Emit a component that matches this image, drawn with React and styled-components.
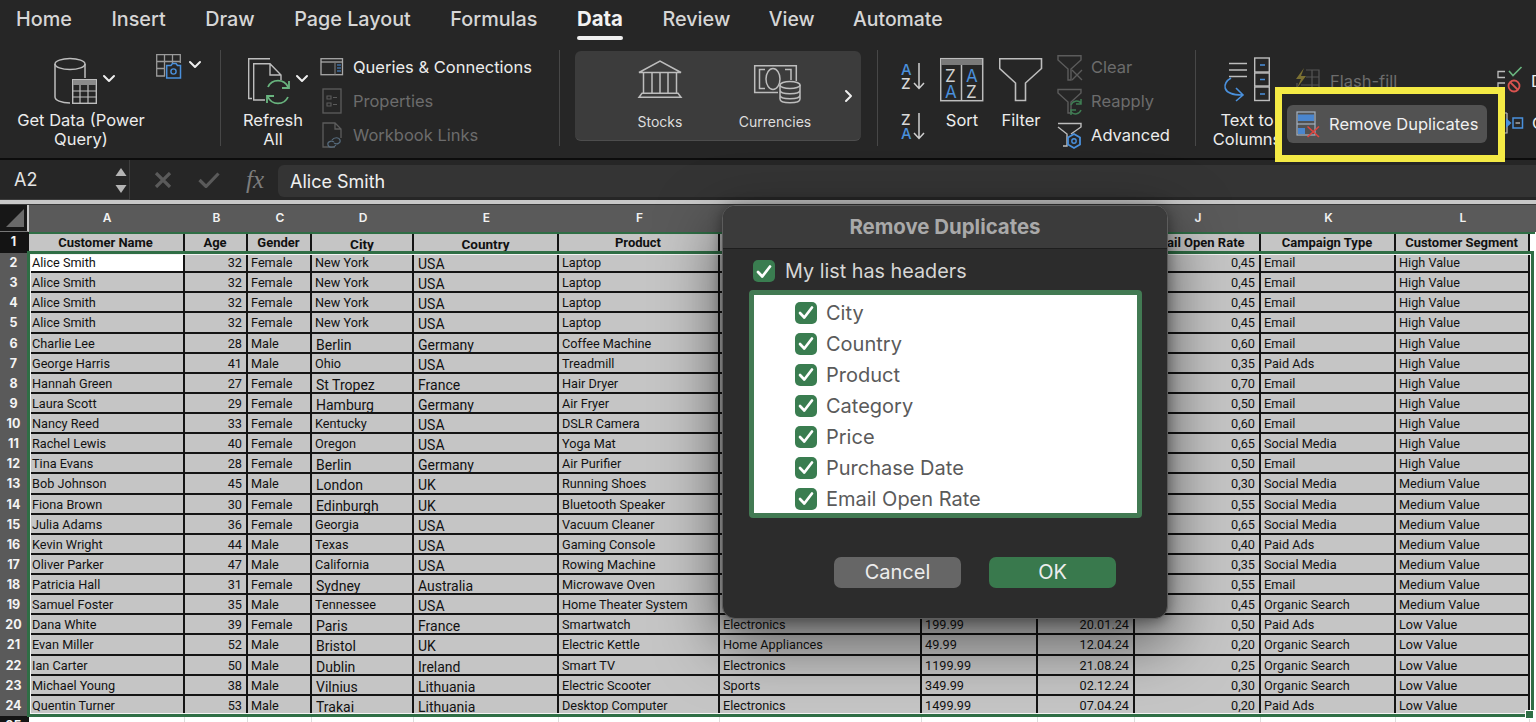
import React from "react";
import styled, { createGlobalStyle } from "styled-components";

const GlobalStyle = createGlobalStyle`
  html, body { margin: 0; padding: 0; background: #262626; overflow: hidden; }
  #root { width: 1536px; height: 722px; overflow: hidden; }
  * { box-sizing: border-box; }
`;

const SANS = `Inter, "Liberation Sans", sans-serif`;
const CELL = `Roboto, "Liberation Sans", sans-serif`;
const COLS = "29px 156px 63px 64px 102px 145px 161px 202px 116px 97px 126px 135px 134px 6px";

const Page = styled.div`
  width: 1536px;
  height: 722px;
  display: flex;
  flex-direction: column;
  background: #262626;
  font-family: ${SANS};
  position: relative;
  overflow: hidden;
`;

/* ---------- tabs ---------- */
const Tabs = styled.nav`
  height: 44px;
  display: flex;
  gap: 39.5px;
  padding-left: 16px;
`;
const Tab = styled.div`
  position: relative;
  height: 38px;
  line-height: 38px;
  font-size: ${(p) => (p.$tight ? 19.4 : 19.8)}px;
  margin-left: ${(p) => (p.$tight ? -1 : 0)}px;
  font-weight: ${(p) => (p.$active ? 700 : 500)};
  color: ${(p) => (p.$active ? "#f2f2f2" : "#d6d6d6")};
  ${(p) =>
    p.$active &&
    `font-size: 20.4px; &::after { content: ""; position: absolute; left: 0; right: 0; bottom: -2px; height: 4px; border-radius: 2px; background: #eee; }`}
`;

/* ---------- ribbon ---------- */
const Ribbon = styled.div`
  position: relative;
  height: 114px;
  display: flex;
  align-items: flex-start;
  flex: none;
`;
const Sep = styled.div`
  width: 1px;
  height: 96px;
  margin-top: 6px;
  background: #474747;
  flex: none;
`;
const Group = styled.div`
  display: flex;
  align-items: flex-start;
  flex: none;
  width: ${(p) => p.$w}px;
  padding-left: ${(p) => p.$pl || 0}px;
  gap: ${(p) => p.$gap || 0}px;
`;
const Tool = styled.div`
  width: ${(p) => p.$w}px;
  margin-left: ${(p) => p.$ml || 0}px;
  flex: none;
  display: flex;
  flex-direction: column;
  align-items: center;
`;
const ToolLabel = styled.div`
  margin-top: 1px;
  font-size: 16.5px;
  line-height: 19px;
  color: #ececec;
  text-align: center;
  white-space: nowrap;
`;
const Icon = styled.svg`
  display: block;
  flex: none;
  fill: none;
`;
const SideIcon = styled.div`
  margin: 6px 0 0 5px;
`;
const SmallList = styled.div`
  display: flex;
  flex-direction: column;
  padding-top: 6px;
  flex: none;
`;
const SmallRow = styled.div`
  height: 34px;
  display: flex;
  align-items: center;
  gap: ${(p) => p.$gap ?? 8}px;
  font-size: 16.5px;
  white-space: nowrap;
  color: ${(p) => (p.$off ? "#6c6c6c" : "#ececec")};
`;
const SortColumn = styled.div`
  display: flex;
  flex-direction: column;
  flex: none;
  padding-top: 18px;
  gap: 20px;
`;
const Panel = styled.div`
  width: 286px;
  height: 90px;
  margin-top: 7px;
  display: flex;
  padding: 5px 0 0 40px;
  gap: 25px;
  background: #3c3c3c;
  border-radius: 6px;
  border-bottom: 1px solid #4d4d4d;
  flex: none;
`;
const PanelItem = styled.div`
  width: 90px;
  display: flex;
  flex-direction: column;
  align-items: center;
`;
const PanelLabel = styled.div`
  margin-top: 6px;
  font-size: 14px;
  line-height: 20px;
  color: #dedede;
`;
const PanelChevron = styled.div`
  margin: 33px 0 0 -2px;
`;
const CutText = styled.div`
  font-size: 16.5px;
  color: #ececec;
  margin-left: 8px;
`;
const Flash = styled.div`
  margin: 20px 0 0 12px;
  width: 203px;
  flex: none;
`;
const CheckTools = styled.div`
  display: flex;
  flex-direction: column;
  flex: none;
  padding-top: 16px;
`;
const CheckToolRow = styled.div`
  display: flex;
  align-items: center;
  height: 42px;
  padding-left: ${(p) => p.$pl || 0}px;
`;

/* annotation highlight over the ribbon */
const Highlight = styled.div`
  position: absolute;
  left: 1275px;
  top: 43px;
  width: 230px;
  height: 75px;
  border: 7.5px solid #f4ea45;
  background: #262626;
  z-index: 3;
  display: flex;
  align-items: center;
  padding: 0 0 1px 5px;
`;
const DupButton = styled.div`
  width: 200px;
  height: 38px;
  border-radius: 6px;
  background: #525252;
  display: flex;
  align-items: center;
  gap: 9px;
  padding: 0 0 1px 9px;
  font-size: 16.5px;
  color: #f0f0f0;
  white-space: nowrap;
`;

/* ---------- formula bar ---------- */
const FormulaBar = styled.div`
  height: 42px;
  flex: none;
  display: flex;
  border-top: 2px solid #0c0c0c;
  background: #262626;
  align-items: stretch;
`;
const NameBox = styled.div`
  width: 130px;
  flex: none;
  padding-left: 14px;
  display: flex;
  align-items: center;
  font-size: 18px;
  color: #e4e4e4;
  border-right: 1px solid #3d3d3d;
  border-bottom: 1px solid #3d3d3d;
`;
const Stepper = styled.div`
  margin-left: auto;
  margin-right: 1px;
`;
const BarIcons = styled.div`
  width: 148px;
  flex: none;
  display: flex;
  align-items: center;
`;
const Fx = styled.span`
  font-family: "Liberation Serif", serif;
  font-style: italic;
  font-size: 25px;
  color: #7d7d7d;
  margin-left: 26px;
`;
const BarMark = styled(Icon)`
  margin-left: ${(p) => p.$ml}px;
`;
const FormulaInput = styled.div`
  flex: 1;
  margin: 5px 0 3px 0;
  background: #343434;
  border-radius: 6px 0 0 6px;
  padding-left: 12px;
  display: flex;
  align-items: center;
  font-size: 18px;
  color: #f0f0f0;
`;
const TopRule = styled.div`
  height: 5px;
  flex: none;
  background: #c8c8c8;
  border-bottom: 1px solid #3a3a3a;
`;

/* ---------- sheet ---------- */
const Sheet = styled.div`
  position: relative;
  flex: 1;
  background: #fff;
  overflow: hidden;
  font-family: ${CELL};
`;
const ColHeader = styled.div`
  display: grid;
  grid-template-columns: ${COLS};
  height: 27px;
  background: #5a5a5a;
`;
const ColLetter = styled.div`
  font-family: ${SANS};
  font-weight: 600;
  font-size: 12px;
  line-height: 25px;
  color: #f2f2f2;
  text-align: center;
`;
const Corner = styled.div`
  background: #171717;
  border-right: 2px solid #c8c8c8;
  border-bottom: 1px solid #777;
  display: flex;
  align-items: flex-end;
  justify-content: flex-end;
  padding: 0 3px 4px 0;
`;
const Row = styled.div`
  display: grid;
  grid-template-columns: ${COLS};
  height: ${(p) => p.$h || 20.13}px;
`;
const RowNum = styled.div`
  background: ${(p) => (p.$dark ? "#141414" : "#5a5a5a")};
  color: #f4f4f4;
  font-family: ${SANS};
  font-weight: 700;
  font-size: 12.5px;
  text-align: center;
  line-height: 20px;
  padding-right: 2px;
`;
const Cell = styled.div`
  background: ${(p) => (p.$on ? "#fff" : "#c5c5c5")};
  border-right: 2px solid #141414;
  border-bottom: 2px solid #141414;
  color: #111;
  font-size: ${(p) => (p.$big ? 14 : 12.7)}px;
  line-height: ${(p) => (p.$big ? 21 : 19)}px;
  padding: ${(p) => (p.$big ? "1px 4px 0" : "0 4px 0 3px")};
  text-align: ${(p) => (p.$right ? "right" : "left")};
  white-space: nowrap;
  overflow: hidden;
`;
const HeadCell = styled(Cell)`
  font-weight: 700;
  text-align: center;
  font-size: ${(p) => (p.$big ? 13.5 : 13)}px;
  border-bottom: 0;
  padding-top: ${(p) => (p.$big ? 2 : 1)}px;
`;
const Blank = styled.div`
  background: #fff;
`;
const EmptyCell = styled.div`
  background: #fff;
  border-right: 1px solid #dcdcdc;
`;
const HeadFrame = styled.div`
  position: absolute;
  left: 29px;
  top: 27px;
  width: 1506px;
  height: 21px;
  border-top: 2px solid #2f6e45;
  pointer-events: none;
`;
const SelectFrame = styled.div`
  position: absolute;
  left: 27px;
  top: 46px;
  width: 1507px;
  height: 466px;
  border: 3px solid #2f6e45;
  box-shadow: inset 0 0 0 1px #f4f4f4;
  pointer-events: none;
  z-index: 1;
`;
const Handle = styled.div`
  position: absolute;
  right: -3px;
  bottom: -5px;
  width: 9px;
  height: 9px;
  background: #2f6e45;
  border: 1px solid #fff;
`;

/* ---------- dialog ---------- */
const Dialog = styled.div`
  position: absolute;
  left: 722px;
  top: 205px;
  width: 446px;
  height: 414px;
  background: #2c2c2c;
  border: 1px solid #5c5c5c;
  border-radius: 13px;
  box-shadow: 0 22px 60px 4px rgba(0, 0, 0, 0.5), 0 2px 14px rgba(0, 0, 0, 0.4);
  z-index: 5;
  display: flex;
  flex-direction: column;
  overflow: hidden;
`;
const DialogTitle = styled.div`
  height: 43px;
  flex: none;
  background: #3b3b3b;
  border-bottom: 1px solid #1e1e1e;
  color: #a9a9a9;
  font-weight: 700;
  font-size: 20.4px;
  line-height: 41px;
  text-align: center;
`;
const HeadersRow = styled.div`
  display: flex;
  align-items: center;
  gap: 10px;
  margin: 11px 0 0 30px;
  font-size: 19.8px;
  line-height: 22px;
  color: #d6d6d6;
`;
const ListBox = styled.div`
  width: 393px;
  height: 228px;
  margin: 8px 0 0 26px;
  background: #fff;
  border: 5px solid #427a53;
  border-radius: 4px;
  padding: 2px 0 0 41px;
  display: flex;
  flex-direction: column;
  overflow: hidden;
`;
const ListRow = styled.div`
  height: 31px;
  flex: none;
  display: flex;
  align-items: center;
  gap: 9px;
  font-size: 20px;
  color: #5a5a5a;
`;
const Box = styled.span`
  width: 22px;
  height: 22px;
  flex: none;
  background: #3a7d50;
  border-radius: 5px;
  display: flex;
  align-items: center;
  justify-content: center;
`;
const Buttons = styled.div`
  display: flex;
  gap: 28px;
  margin: 39px 0 0 111px;
`;
const DialogButton = styled.div`
  width: 127px;
  height: 31px;
  border-radius: 7px;
  background: ${(p) => (p.$primary ? "#39794d" : "#666")};
  color: #ededed;
  font-size: 20px;
  line-height: 30px;
  text-align: center;
`;
const IconLetter = styled.text`
  font-family: ${SANS};
  font-size: ${(p) => p.$size || 15}px;
  font-weight: ${(p) => p.$weight || 500};
`;

/* ---------- icons ---------- */
const G = "#bdbdbd";
const D = "#5c5c5c";
const B = "#4a90dc";
const Chev = ({ x, y, c = "#eee" }) => (
  <path d={`M${x - 5} ${y - 3} L${x} ${y + 2} L${x + 5} ${y - 3}`} stroke={c} strokeWidth="2" strokeLinecap="round" strokeLinejoin="round" />
);

const GetDataIcon = () => (
  <Icon width="128" height="66" viewBox="17 44 128 66">
    <ellipse cx="70" cy="64" rx="15" ry="5.5" stroke={G} strokeWidth="1.5" />
    <path d="M55 64V97C55 100 61 103 70 103M85 64V78" stroke={G} strokeWidth="1.5" />
    <rect x="72.7" y="79.7" width="23.6" height="23.6" stroke={G} strokeWidth="1.4" />
    <rect x="73" y="80" width="23" height="5" fill="#8a8a8a" />
    <path d="M72 91H97M72 97H97M80 85V103M88 85V103" stroke={G} strokeWidth="1.2" />
    <Chev x={109} y={79} />
  </Icon>
);
const CameraTableIcon = () => (
  <Icon width="55" height="32" viewBox="150 50 55 32">
    <path d="M165 76H156.7V54.7H180.3V63M156.7 61.5H180M156.7 68.5H165M164.5 55V76M172.5 55V63" stroke="#9a9a9a" strokeWidth="1.3" />
    <path d="M166.7 78V65.5H171L172.5 63.5H176L177.5 65.5H180.5V78Z" stroke={B} strokeWidth="1.5" />
    <circle cx="173.5" cy="71.5" r="2.6" stroke={B} strokeWidth="1.4" />
    <Chev x={195} y={65} />
  </Icon>
);
const RefreshIcon = () => (
  <Icon width="80" height="66" viewBox="233 44 80 66">
    <path d="M270 58.7H248.7V98.5H252" stroke={G} strokeWidth="1.4" />
    <path d="M265 100H253.7V63.7H270L281 75V80M270 64V75H281" stroke={G} strokeWidth="1.4" />
    <path d="M268 87A11 11 0 0 1 288 87M288 97A11 11 0 0 1 268 97" stroke="#69b57f" strokeWidth="1.8" />
    <path d="M289 81V88H282M267 103V96H274" stroke="#69b57f" strokeWidth="1.8" />
    <Chev x={302} y={79} />
  </Icon>
);
const QueriesIcon = () => (
  <Icon width="24" height="34" viewBox="320 50 24 34">
    <rect x="321" y="58.7" width="21.5" height="16" stroke="#a8a8a8" strokeWidth="1.3" />
    <path d="M321 62H342.5" stroke="#a8a8a8" strokeWidth="1.3" />
    <path d="M335 62V74.5" stroke="#777" strokeWidth="1.2" />
    <path d="M337 65H341M337 68H341M337 71H341" stroke={B} strokeWidth="1.2" />
  </Icon>
);
const PropertiesIcon = () => (
  <Icon width="24" height="34" viewBox="320 84 24 34">
    <rect x="323" y="89" width="18" height="24" stroke={D} strokeWidth="1.3" />
    <path d="M327 96H331V99H327ZM327 103H331V106H327ZM333 97.5H337M333 104.5H337" stroke={D} strokeWidth="1.1" />
  </Icon>
);
const LinksIcon = () => (
  <Icon width="24" height="34" viewBox="320 118 24 34">
    <path d="M335 147H323V123H335L341 129V138M335 123V129H341" stroke={D} strokeWidth="1.3" />
    <path d="M332 140C334 137 339 137 340 140C341 143 337 145 334 143M336 145C334 148 329 148 328 145C327 142 331 140 334 142" stroke="#566b7d" strokeWidth="1.2" />
  </Icon>
);
const BankIcon = () => (
  <Icon width="50" height="50" viewBox="635 56 50 50">
    <path d="M639 72.5L660 61L681 72.5H639Z" stroke={G} strokeWidth="1.5" />
    <path d="M643.5 73V93M652 73V93M660 73V93M668 73V93M676.5 73V93" stroke={G} strokeWidth="1.5" />
    <path d="M642 93.2H678L681 97.3H639Z" stroke={G} strokeWidth="1.5" />
  </Icon>
);
const CurrencyIcon = () => (
  <Icon width="60" height="50" viewBox="745 56 60 50">
    <path d="M778 92.5H754.7V65.7H796.3V81" stroke={G} strokeWidth="1.5" />
    <path d="M765 69.5H759.5V88.5H765M785 69.5H791V80" stroke={G} strokeWidth="1.5" />
    <ellipse cx="773" cy="79" rx="7" ry="10.5" stroke={G} strokeWidth="1.5" />
    <rect x="779" y="82" width="22" height="20" rx="9" fill="#3c3c3c" />
    <ellipse cx="790" cy="85" rx="10" ry="3.6" stroke={G} strokeWidth="1.5" />
    <path d="M780 85V99C780 104 800 104 800 99V85M780 90C780 95 800 95 800 90M780 95C780 100 800 100 800 95" stroke={G} strokeWidth="1.5" />
  </Icon>
);
const AzIcon = ({ top, bottom, topColor, bottomColor }) => (
  <Icon width="26" height="30" viewBox="0 0 26 30">
    <IconLetter x="1" y="12.5" fill={topColor}>{top}</IconLetter>
    <IconLetter x="1" y="26.5" fill={bottomColor}>{bottom}</IconLetter>
    <path d="M19 1V26M14 21L19 26.5L24 21" stroke="#cfcfcf" strokeWidth="1.5" />
  </Icon>
);
const SortIcon = () => (
  <Icon width="44" height="66" viewBox="941 44 44 66">
    <rect x="941.7" y="58.7" width="42" height="42" stroke={G} strokeWidth="1.5" />
    <rect x="942" y="59" width="41" height="6" fill="#7a7a7a" />
    <path d="M962.5 65V100" stroke={G} strokeWidth="1.5" />
    <IconLetter x="946" y="82" $size={17} $weight={400} fill="#d0d0d0">Z</IconLetter>
    <IconLetter x="946" y="98" $size={17} $weight={400} fill={B}>A</IconLetter>
    <IconLetter x="967" y="82" $size={17} $weight={400} fill={B}>A</IconLetter>
    <IconLetter x="967" y="98" $size={17} $weight={400} fill="#d0d0d0">Z</IconLetter>
  </Icon>
);
const FilterIcon = () => (
  <Icon width="44" height="66" viewBox="999 44 44 66">
    <path d="M999.7 58.7H1041.5V68.5L1025.5 83V100.5H1015.5V83L999.7 68.5Z" stroke={G} strokeWidth="1.6" />
  </Icon>
);
const ClearIcon = () => (
  <Icon width="26" height="34" viewBox="1057 50 26 34">
    <path d="M1058 55.7H1081V60L1071 69V80H1068V69L1058 60Z" stroke={D} strokeWidth="1.4" />
    <path d="M1072 70L1082 80M1082 70L1072 80" stroke={D} strokeWidth="1.4" />
  </Icon>
);
const ReapplyIcon = () => (
  <Icon width="26" height="34" viewBox="1057 84 26 34">
    <path d="M1058 89.5H1081V93L1071 102V113H1068V102L1058 93Z" stroke={D} strokeWidth="1.4" />
    <path d="M1071 105A6 6 0 0 1 1081 103M1081 110A6 6 0 0 1 1071 112M1081 99V104H1076M1071 115V110H1076" stroke="#3f7d53" strokeWidth="1.5" />
  </Icon>
);
const AdvancedIcon = () => (
  <Icon width="26" height="34" viewBox="1057 118 26 34">
    <path d="M1058 123.5H1081V127L1071 134M1058 127L1067 134V146H1063" stroke={G} strokeWidth="1.4" />
    <path d="M1074 134L1080 137.5V144.5L1074 148L1068 144.5V137.5Z" stroke={B} strokeWidth="1.8" />
    <circle cx="1074" cy="141" r="2.2" stroke={B} strokeWidth="1.4" />
  </Icon>
);
const TextColsIcon = () => (
  <Icon width="70" height="66" viewBox="1212 44 70 66">
    <path d="M1229 63.5H1247M1229 70H1247M1229 76.5H1247" stroke={G} strokeWidth="1.6" />
    <rect x="1254.7" y="58" width="14.6" height="14" stroke={G} strokeWidth="1.4" />
    <rect x="1254.7" y="73" width="14.6" height="13" stroke={G} strokeWidth="1.4" />
    <rect x="1254.7" y="87" width="14.6" height="13.5" stroke={G} strokeWidth="1.4" />
    <path d="M1260 65H1265M1260 79.5H1265M1260 94H1265" stroke={B} strokeWidth="1.6" />
    <path d="M1231 78C1222 83 1221 95 1242 95M1236 88L1243 95L1236 101" stroke={B} strokeWidth="1.6" />
  </Icon>
);
const FlashRowIcon = () => (
  <Icon width="26" height="34" viewBox="1293 64 26 34">
    <path d="M1305 70H1318V92H1296V83M1311 70V92M1305 77H1318M1300 85H1318" stroke="#555" strokeWidth="1.2" />
    <path d="M1303 68L1295 79H1300L1296 88L1305 76H1300Z" fill="#7b7032" />
  </Icon>
);
const DupIcon = () => (
  <Icon width="24" height="28" viewBox="1297 111 24 28">
    <rect x="1298" y="113" width="18" height="23" stroke="#a4b2c2" strokeWidth="1.2" />
    <rect x="1299" y="115.5" width="16" height="6.5" fill="#4a86cf" />
    <rect x="1299" y="129" width="7" height="6" fill="#4a86cf" />
    <path d="M1298 125H1316" stroke="#a4b2c2" strokeWidth="1.2" />
    <path d="M1308.5 127.5L1320 138M1320 127.5L1308.5 138" stroke="#e0453f" strokeWidth="1.6" />
  </Icon>
);
const ValidIcon = () => (
  <Icon width="26" height="32" viewBox="1497 66 26 32">
    <path d="M1505 72.5H1498V78.5H1505M1505 84H1498V90H1505" stroke={G} strokeWidth="1.3" />
    <path d="M1509 72L1513 76.5L1521.5 68" stroke="#69b57f" strokeWidth="1.6" />
    <circle cx="1514" cy="87" r="5.5" stroke="#d9534f" strokeWidth="1.8" />
    <path d="M1510 83L1518 91" stroke="#d9534f" strokeWidth="1.8" />
  </Icon>
);
const ConsolidateIcon = () => (
  <Icon width="19" height="32" viewBox="1504 106 19 32">
    <path d="M1506 112H1504M1506 112V132H1504" stroke={G} strokeWidth="1.2" />
    <path d="M1505 117L1510.5 122L1505 127Z" fill={B} />
    <rect x="1512" y="117" width="9.5" height="10" stroke={B} strokeWidth="1.5" />
    <path d="M1514.5 122H1519" stroke={G} strokeWidth="1.3" />
  </Icon>
);
const SmallChevronRight = () => (
  <Icon width="10" height="14" viewBox="0 0 10 14">
    <path d="M3 2L8 7L3 12" stroke="#eee" strokeWidth="2" strokeLinecap="round" strokeLinejoin="round" />
  </Icon>
);
const StepArrows = () => (
  <Icon width="14" height="40" viewBox="0 0 14 36">
    <path d="M7 6L12.5 14H1.5Z" fill="#b5b5b5" />
    <path d="M7 31L12.5 23H1.5Z" fill="#b5b5b5" />
  </Icon>
);
const CancelMark = () => (
  <BarMark width="18" height="16" viewBox="0 0 18 16" $ml={24}>
    <path d="M2 1L16 15M16 1L2 15" stroke="#5a5a5a" strokeWidth="3.2" />
  </BarMark>
);
const EnterMark = () => (
  <BarMark width="22" height="16" viewBox="0 0 22 16" $ml={26}>
    <path d="M1.5 8L8 14.5L20.5 1.5" stroke="#5a5a5a" strokeWidth="3.2" />
  </BarMark>
);
const CornerMark = () => (
  <Icon width="18" height="18" viewBox="0 0 18 18">
    <path d="M18 0V18H0Z" fill="#6a6a6a" />
  </Icon>
);
const Tick = () => (
  <Icon width="16" height="15" viewBox="0 0 16 15">
    <path d="M2 8L6.3 12.5L14 2.5" stroke="#fff" strokeWidth="2.7" strokeLinecap="round" strokeLinejoin="round" />
  </Icon>
);

/* ---------- data ---------- */
const LETTERS = ["A", "B", "C", "D", "E", "F", "G", "H", "I", "J", "K", "L"];
const HEADERS = ["Customer Name", "Age", "Gender", "City", "Country", "Product", "Category", "Price", "Purchase Date", "Email Open Rate", "Campaign Type", "Customer Segment"];
const HV = "High Value", MV = "Medium Value", LV = "Low Value", OS = "Organic Search", SM = "Social Media", PA = "Paid Ads";
const ROWS = [
  ["Alice Smith", 32, "Female", "New York", 0, "USA", "Laptop", "", "", "", "0,45", "Email", HV],
  ["Alice Smith", 32, "Female", "New York", 0, "USA", "Laptop", "", "", "", "0,45", "Email", HV],
  ["Alice Smith", 32, "Female", "New York", 0, "USA", "Laptop", "", "", "", "0,45", "Email", HV],
  ["Alice Smith", 32, "Female", "New York", 0, "USA", "Laptop", "", "", "", "0,45", "Email", HV],
  ["Charlie Lee", 28, "Male", "Berlin", 1, "Germany", "Coffee Machine", "", "", "", "0,60", "Email", HV],
  ["George Harris", 41, "Male", "Ohio", 0, "USA", "Treadmill", "", "", "", "0,35", PA, HV],
  ["Hannah Green", 27, "Female", "St Tropez", 1, "France", "Hair Dryer", "", "", "", "0,70", "Email", HV],
  ["Laura Scott", 29, "Female", "Hamburg", 1, "Germany", "Air Fryer", "", "", "", "0,50", "Email", HV],
  ["Nancy Reed", 33, "Female", "Kentucky", 0, "USA", "DSLR Camera", "", "", "", "0,60", "Email", HV],
  ["Rachel Lewis", 40, "Female", "Oregon", 0, "USA", "Yoga Mat", "", "", "", "0,65", SM, HV],
  ["Tina Evans", 28, "Female", "Berlin", 1, "Germany", "Air Purifier", "", "", "", "0,50", "Email", HV],
  ["Bob Johnson", 45, "Male", "London", 1, "UK", "Running Shoes", "", "", "", "0,30", SM, MV],
  ["Fiona Brown", 30, "Female", "Edinburgh", 1, "UK", "Bluetooth Speaker", "", "", "", "0,55", SM, MV],
  ["Julia Adams", 36, "Female", "Georgia", 0, "USA", "Vacuum Cleaner", "", "", "", "0,65", SM, MV],
  ["Kevin Wright", 44, "Male", "Texas", 0, "USA", "Gaming Console", "", "", "", "0,40", PA, MV],
  ["Oliver Parker", 47, "Male", "California", 0, "USA", "Rowing Machine", "", "", "", "0,35", SM, MV],
  ["Patricia Hall", 31, "Female", "Sydney", 1, "Australia", "Microwave Oven", "", "", "", "0,55", "Email", MV],
  ["Samuel Foster", 35, "Male", "Tennessee", 0, "USA", "Home Theater System", "", "", "", "0,45", OS, MV],
  ["Dana White", 39, "Female", "Paris", 1, "France", "Smartwatch", "Electronics", "199.99", "20.01.24", "0,50", PA, LV],
  ["Evan Miller", 52, "Male", "Bristol", 1, "UK", "Electric Kettle", "Home Appliances", "49.99", "12.04.24", "0,20", OS, LV],
  ["Ian Carter", 50, "Male", "Dublin", 1, "Ireland", "Smart TV", "Electronics", "1199.99", "21.08.24", "0,25", OS, LV],
  ["Michael Young", 38, "Male", "Vilnius", 1, "Lithuania", "Electric Scooter", "Sports", "349.99", "02.12.24", "0,30", OS, LV],
  ["Quentin Turner", 53, "Male", "Trakai", 1, "Lithuania", "Desktop Computer", "Electronics", "1499.99", "07.04.24", "0,20", PA, LV],
];
const TABS = ["Home", "Insert", "Draw", "Page Layout", "Formulas", "Data", "Review", "View", "Automate"];
const TIGHT = ["View", "Automate"];
const FIELDS = ["City", "Country", "Product", "Category", "Price", "Purchase Date", "Email Open Rate"];

export default function App() {
  return (
    <Page>
      <GlobalStyle />
      <Tabs>
        {TABS.map((t) => (
          <Tab key={t} $active={t === "Data"} $tight={TIGHT.includes(t)}>{t}</Tab>
        ))}
      </Tabs>

      <Ribbon>
        <Group $w={220} $pl={17}>
          <Tool $w={128}>
            <GetDataIcon />
            <ToolLabel>Get Data (Power<br />Query)</ToolLabel>
          </Tool>
          <SideIcon><CameraTableIcon /></SideIcon>
        </Group>
        <Sep />
        <Group $w={338} $pl={12} $gap={7}>
          <Tool $w={80}>
            <RefreshIcon />
            <ToolLabel>Refresh<br />All</ToolLabel>
          </Tool>
          <SmallList>
            <SmallRow $gap={9}><QueriesIcon />Queries &amp; Connections</SmallRow>
            <SmallRow $gap={9} $off><PropertiesIcon />Properties</SmallRow>
            <SmallRow $gap={9} $off><LinksIcon />Workbook Links</SmallRow>
          </SmallList>
        </Group>
        <Sep />
        <Group $w={317} $pl={15}>
          <Panel>
            <PanelItem>
              <BankIcon />
              <PanelLabel>Stocks</PanelLabel>
            </PanelItem>
            <PanelItem>
              <CurrencyIcon />
              <PanelLabel>Currencies</PanelLabel>
            </PanelItem>
            <PanelChevron><SmallChevronRight /></PanelChevron>
          </Panel>
        </Group>
        <Sep />
        <Group $w={317} $pl={22} $gap={14}>
          <SortColumn>
            <AzIcon top="A" bottom="Z" topColor={B} bottomColor="#d8d8d8" />
            <AzIcon top="Z" bottom="A" topColor="#d8d8d8" bottomColor={B} />
          </SortColumn>
          <Tool $w={44}>
            <SortIcon />
            <ToolLabel>Sort</ToolLabel>
          </Tool>
          <Tool $w={44} $ml={1}>
            <FilterIcon />
            <ToolLabel>Filter</ToolLabel>
          </Tool>
          <SmallList>
            <SmallRow $off><ClearIcon />Clear</SmallRow>
            <SmallRow $off><ReapplyIcon />Reapply</SmallRow>
            <SmallRow><AdvancedIcon />Advanced</SmallRow>
          </SmallList>
        </Group>
        <Sep />
        <Group $w={340} $pl={16}>
          <Tool $w={70}>
            <TextColsIcon />
            <ToolLabel>Text to<br />Columns</ToolLabel>
          </Tool>
          <Flash>
            <SmallRow $off $gap={10}><FlashRowIcon />Flash-fill</SmallRow>
          </Flash>
          <CheckTools>
            <CheckToolRow>
              <ValidIcon /><CutText>Data Validation</CutText>
            </CheckToolRow>
            <CheckToolRow $pl={8}>
              <ConsolidateIcon /><CutText>Consolidate</CutText>
            </CheckToolRow>
          </CheckTools>
        </Group>
        <Highlight>
          <DupButton><DupIcon />Remove Duplicates</DupButton>
        </Highlight>
      </Ribbon>

      <FormulaBar>
        <NameBox>
          A2
          <Stepper><StepArrows /></Stepper>
        </NameBox>
        <BarIcons>
          <CancelMark />
          <EnterMark />
          <Fx>fx</Fx>
        </BarIcons>
        <FormulaInput>Alice Smith</FormulaInput>
      </FormulaBar>
      <TopRule />

      <Sheet>
        <ColHeader>
          <Corner><CornerMark /></Corner>
          {LETTERS.map((l) => <ColLetter key={l}>{l}</ColLetter>)}
          <ColLetter />
        </ColHeader>
        <Row $h={21}>
          <RowNum $dark>1</RowNum>
          {HEADERS.map((h, i) => (
            <HeadCell key={h} $big={i === 3 || i === 4}>{h}</HeadCell>
          ))}
          <Blank />
        </Row>
        <HeadFrame />
        {ROWS.map((r, i) => {
          const [name, age, gender, city, cityBig, country, product, category, price, date, rate, campaign, segment] = r;
          return (
            <Row key={i}>
              <RowNum>{i + 2}</RowNum>
              <Cell $on={i === 0}>{name}</Cell>
              <Cell $right>{age}</Cell>
              <Cell>{gender}</Cell>
              <Cell $big={!!cityBig}>{city}</Cell>
              <Cell $big>{country}</Cell>
              <Cell>{product}</Cell>
              <Cell>{category}</Cell>
              <Cell>{price}</Cell>
              <Cell $right>{date}</Cell>
              <Cell $right>{rate}</Cell>
              <Cell>{campaign}</Cell>
              <Cell>{segment}</Cell>
              <Blank />
            </Row>
          );
        })}
        <Row>
          <RowNum $dark>25</RowNum>
          {LETTERS.map((l) => <EmptyCell key={l} />)}
          <Blank />
        </Row>
        <SelectFrame><Handle /></SelectFrame>
      </Sheet>

      <Dialog>
        <DialogTitle>Remove Duplicates</DialogTitle>
        <HeadersRow><Box><Tick /></Box>My list has headers</HeadersRow>
        <ListBox>
          {FIELDS.map((f) => (
            <ListRow key={f}><Box><Tick /></Box>{f}</ListRow>
          ))}
        </ListBox>
        <Buttons>
          <DialogButton>Cancel</DialogButton>
          <DialogButton $primary>OK</DialogButton>
        </Buttons>
      </Dialog>
    </Page>
  );
}
